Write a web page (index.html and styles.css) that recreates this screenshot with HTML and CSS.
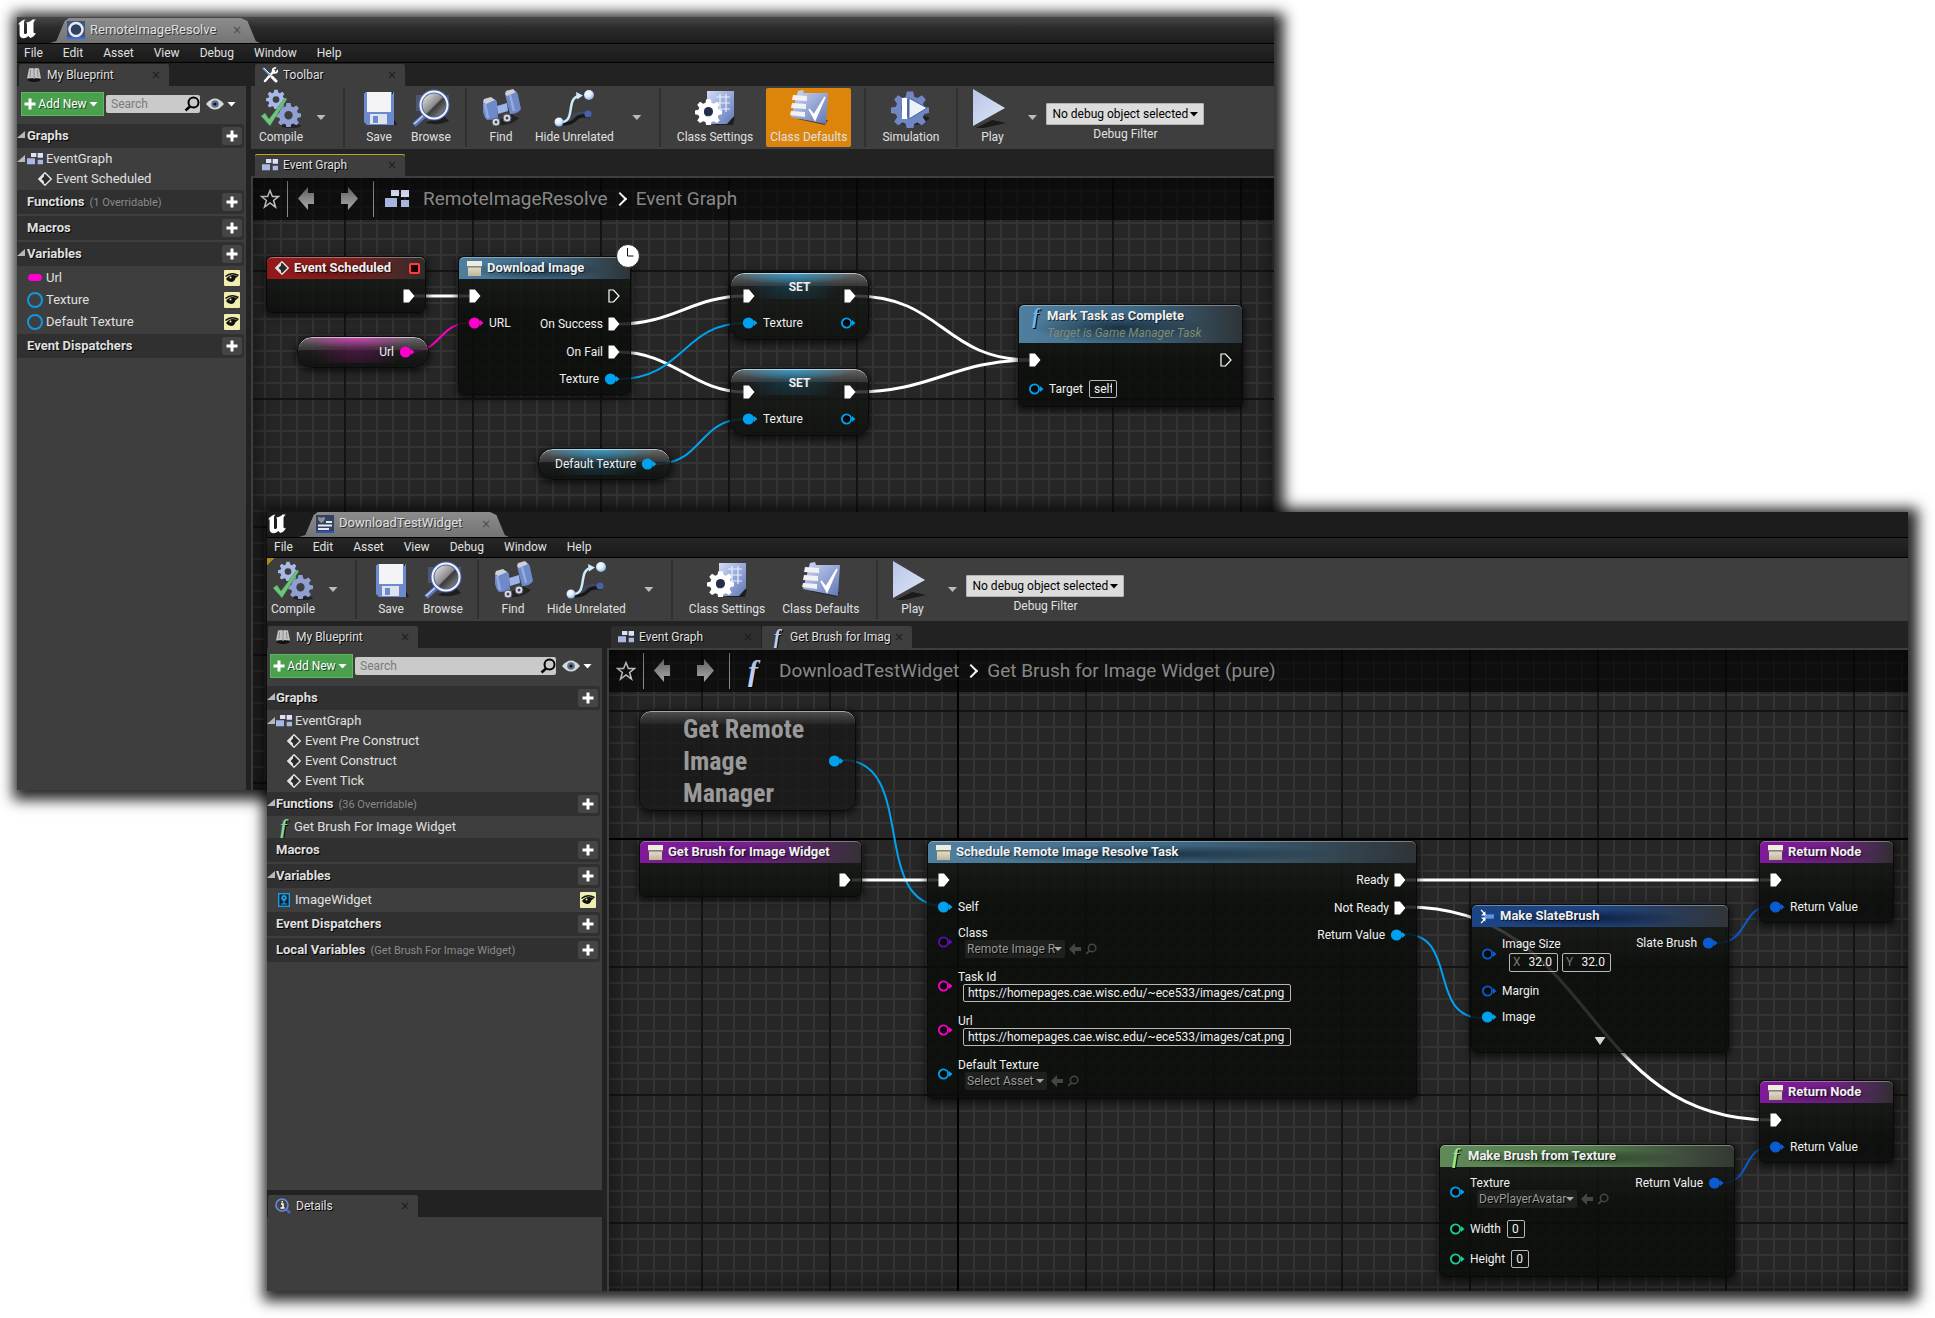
FILE: index.html
```html
<!DOCTYPE html>
<html lang="en">
<head>
<meta charset="utf-8">
<title>Blueprint editors</title>
<link rel="stylesheet" href="styles.css">
</head>
<body>
<svg class="defs" aria-hidden="true">
  <defs>
    <linearGradient id="steel" x1="0" y1="0" x2="1" y2="1"><stop offset="0" stop-color="#d3dcf5"/><stop offset="1" stop-color="#5f76b8"/></linearGradient>
    <linearGradient id="pale" x1="0" y1="0" x2="1" y2="1"><stop offset="0" stop-color="#b9c4ea"/><stop offset="1" stop-color="#dce8f2"/></linearGradient>
    <linearGradient id="glass" x1="0" y1="0" x2="1" y2="1"><stop offset="0" stop-color="#fff"/><stop offset=".5" stop-color="#8a8a8a"/><stop offset=".55" stop-color="#3a3a3a"/><stop offset="1" stop-color="#aaa"/></linearGradient>
    <radialGradient id="ball" cx=".4" cy=".35" r=".7"><stop offset="0" stop-color="#fff"/><stop offset=".5" stop-color="#dcecff"/><stop offset="1" stop-color="#7aa0dc"/></radialGradient>
    <linearGradient id="sand" x1="0" y1="0" x2="0" y2="1"><stop offset="0" stop-color="#e0dcc8"/><stop offset="1" stop-color="#c0b894"/></linearGradient>
    <linearGradient id="grayv" x1="0" y1="0" x2="0" y2="1"><stop offset="0" stop-color="#6a6a6a"/><stop offset="1" stop-color="#aaa"/></linearGradient>
  </defs>
  <symbol id="logo" viewBox="0 0 20 20"><path fill="#fff" d="M1 5.500C2.500 3 5.500 1 8.500.6 7.300 1.600 7 2.500 7 4v9.500c0 1.400 1 2 2.200 1.300.5-.3.8-.7.8-1.200V5.600C10 4.500 9.700 4 9 3.500 11.500 3.500 14 2.300 15.500.6h3.300C17.200 2 16.500 3 16.500 4.600v8.200c0 1.500 1 1.900 2.500.9-1.200 2.900-3.100 4.500-5.700 5.300l-2-2C9.600 18.600 8 19.300 6 19.200c-2.200-.3-3.400-1.700-3.400-4.200V6.500C2.600 5.400 2 5 1 5.500z"/></symbol>
  <symbol id="ring" viewBox="0 0 18 18"><rect width="18" height="18" fill="#3d5580"/><rect y="16" width="18" height="2" fill="#2e6be6"/><circle cx="9" cy="8.500" r="6.500" fill="#2f4060" stroke="#e8eaf0" stroke-width="2.500"/></symbol>
  <symbol id="widget" viewBox="0 0 18 18"><rect width="18" height="18" fill="#33435f"/><rect y="16" width="18" height="2" fill="#2458b8"/><path d="M2 3.500c0-2 3-2 3.500 0C6 1.500 9 1.500 9 3.500 9 6 5.500 8 5.500 8S2 6 2 3.500z" fill="#8b8f98"/><path d="M10 7h6M2 10.500h14M2 14h11" stroke="#e8eaf0" stroke-width="2"/></symbol>
  <symbol id="book" viewBox="0 0 16 16"><path d="M3 1.500 7 1l1 1 1-1 4 .5L15 11.500 9 11l-1 1-1-1-6 .5z" fill="#c4c4c4"/><path d="M8 2v9M4.500 3 4 10M11.500 3l.5 7" stroke="#8e8e8e" fill="none"/><path d="M1.500 12 7 11.500l1 1 1-1 5.500.5v1.500l-4.500 1.500h-4L1.500 13.500z" fill="#111"/></symbol>
  <symbol id="tools" viewBox="0 0 16 16"><path d="M12 4 3 14" stroke="#fff" stroke-width="2.500" stroke-linecap="round"/><path d="m10.500 5 .5-3 3-1.500M11.500 6l3-.5L16 3" stroke="#fff" stroke-width="1.800" fill="none"/><path d="m1.500 1.500 6 6" stroke="#6d9be8" stroke-width="2" stroke-linecap="round"/><path d="m2 1 6 6" stroke="#e8f0ff" stroke-width="1"/><path d="m10 10 4 4" stroke="#fff" stroke-width="3" stroke-linecap="round"/></symbol>
  <symbol id="gear" viewBox="-12 -12 24 24"><path fill-rule="evenodd" d="M-2-11h4l.7 3.200 2 .8L7.500-8.700 10-6 8.200-3.300 9-1.500 12-1v3.500l-3 .6-.9 2L10 8 7.500 10.300 4.700 8.600l-2 .8L2 12.500h-4l-.7-3.100-2-.8-2.800 1.700L-10 8l1.900-2.900-.9-2-3-.6V-1l3-.5.8-1.800L-10-6l2.500-2.700L-4.700-7l2-.8zM0-3.300A4 4 0 1 0 0 4.700 4 4 0 0 0 0-3.300z"/></symbol>
  <symbol id="compile" viewBox="0 0 40 40"><ellipse cx="30" cy="37" rx="10" ry="2" fill="#111" opacity=".6"/><use href="#gear" x="5" y="0" width="20" height="20" fill="#aab8e6"/><use href="#gear" x="15" y="13" width="25" height="25" fill="#8f9fd2"/><path d="M0 27l4-3 4 6L24 9l2 1L9 37z" fill="#6fc57a" stroke="#3b7d48" stroke-width=".6"/></symbol>
  <symbol id="save" viewBox="0 0 40 40"><path d="M8 36h30l-3-6z" fill="#111" opacity=".7"/><path d="M5 3h30v33H8l-3-3z" fill="#6d89cf"/><path d="M8 3h24v20H8z" fill="#f4f4f6"/><path d="M11 25h17v10H11z" fill="#dfe3ee"/><path d="M14 27h5v7h-5z" fill="#6d89cf"/><path d="M5 3h1v1H5zM33 3h1v2h-1z" fill="#222"/></symbol>
  <symbol id="browse" viewBox="0 0 40 40"><path d="M14 34q14 3 24-2l-6-6z" fill="#111" opacity=".7"/><path d="M5 6h33v16H5z" fill="#7088c8" opacity=".35"/><path d="M14 26 3 36" stroke="#5a76c0" stroke-width="5"/><path d="M13 26 3 35" stroke="#c6d2f2" stroke-width="1.500"/><circle cx="23" cy="16" r="13.500" fill="url(#glass)" stroke="#4a66a8" stroke-width="4"/><circle cx="23" cy="16" r="13.500" fill="none" stroke="#f2f5ff" stroke-width="2"/></symbol>
  <symbol id="find" viewBox="0 0 40 40"><path d="M10 35q18 4 28-6l-8-4z" fill="#111" opacity=".6"/><path d="m2 13 10-3q3 0 4 3l1 17-11 1q-3-3-4-8zM24 5l9-3q3 0 4 4l3 14q-3 5-11 5z" fill="#6f8acb"/><path d="m4 15 3 14M29 6l4 16" stroke="#93abdf" stroke-width="2.500"/><path d="m2 13 1-3 7-2 4 3-9 4zM24 5l1-3 7-2 3 3-9 4z" fill="#cfd0d4"/><path d="m16 17 10-3 1 8-10 3z" fill="#9db4e8"/><circle cx="15" cy="33" r="4" fill="#d7dbe6" stroke="#556"/><circle cx="26" cy="29" r="4" fill="#d7dbe6" stroke="#556"/><circle cx="15" cy="33" r="1.500" fill="#445"/><circle cx="26" cy="29" r="1.500" fill="#445"/></symbol>
  <symbol id="hide" viewBox="0 0 40 40"><path d="M8 35q10 0 14-5t14-2" stroke="#161616" stroke-width="3" fill="none"/><path d="M6 33q9 0 12-5t14-4" stroke="#3c4a6a" stroke-width="2" fill="none"/><circle cx="34" cy="25" r="3.500" fill="#4763a8"/><path d="M5 33c18 2 6-24 20-26" stroke="#cfeaf8" stroke-width="2.500" fill="none"/><path d="m22 3 7 3.500-6 4z" fill="#cfeaf8"/><circle cx="5" cy="33" r="4.500" fill="url(#ball)"/><circle cx="35" cy="6" r="5" fill="url(#ball)"/></symbol>
  <symbol id="settings" viewBox="0 0 40 40"><path d="M18 36h20l2-8z" fill="#111" opacity=".7"/><path d="M12 2h27v25l-7 8H12z" fill="url(#steel)"/><path d="M21 8h14M21 14h14M21 20h14M25 5v18M31 5v18" stroke="#e8efff" stroke-width="1.200"/><use href="#gear" x="0" y="9" width="27" height="27" fill="#fff"/><circle cx="13.500" cy="22.500" r="4.500" fill="#222e48"/></symbol>
  <symbol id="defaults" viewBox="0 0 40 40"><path d="m8 30 28 6 3-5z" fill="#111" opacity=".6"/><path d="m9 2 5-1 1 3h24l-2 31-35-7z" fill="url(#steel)"/><path d="m4 6 14 1v5L3 11zM3 14l14 1v5L2 19zM2 22l14 1v5L1 26z" fill="#f2f2f6"/><path d="m20 20 5 6L36 8l-10 23z" fill="#fff" stroke="#fff" stroke-width="1.500"/></symbol>
  <symbol id="simulation" viewBox="0 0 40 40"><path d="M8 34q20 6 31-5l-5-2z" fill="#111" opacity=".7"/><use href="#gear" x="0" y="1" width="38" height="38" fill="#7187c4"/><circle cx="19" cy="19" r="9" fill="#5068a8"/><path d="M11 9h5v21h-5z" fill="#fff"/><path d="m18 9 18 10-18 11z" fill="#eaf4f8" stroke="#4a609c"/></symbol>
  <symbol id="play" viewBox="0 0 40 40"><path d="M4 39h8l22-5-14-3z" fill="#111" opacity=".8"/><path d="M1 0v37l32-18z" fill="url(#pale)"/></symbol>
  <symbol id="nodes" viewBox="0 0 24 20"><path d="M12 4h8v13" stroke="#3e3e3e" fill="none"/><path d="M6 1h8v6H6zM16 1h8v7h-8z" fill="#dbe3fa"/><path d="M0 9h12v9H0zM16 11h8v7h-8z" fill="#a9b7e2"/></symbol>
  <symbol id="event" viewBox="0 0 14 14"><path d="M7 .8 13.200 7 7 13.200.8 7z" fill="#2a2a2a" stroke="#e4e4e4" stroke-width="1.400"/><path d="M6 1.500v3L3.500 7 6 9.500v3L1 7z" fill="#e4e4e4"/></symbol>
  <symbol id="box" viewBox="0 0 15 15"><path d="M0 0h15v5H0z" fill="#efeddf"/><path d="M0 5h15v1.500H0z" fill="#8d8570"/><path d="M1 6.500h13V15H1z" fill="url(#sand)"/></symbol>
  <symbol id="plus" viewBox="0 0 12 12"><path d="M4.500.5h3v4h4v3h-4v4h-3v-4h-4v-3h4z" fill="#fff"/></symbol>
  <symbol id="lens" viewBox="0 0 16 16"><circle cx="9.500" cy="6.500" r="5" fill="none" stroke="currentColor" stroke-width="2"/><path d="m6 10.500-4.500 4" stroke="currentColor" stroke-width="2.500"/></symbol>
  <symbol id="eye" viewBox="0 0 18 12"><path d="M0 6q9-11 18 0-9 11-18 0z" fill="#d8d8d8"/><circle cx="9" cy="6" r="3.800" fill="#5b7192"/><circle cx="9" cy="6" r="1.600" fill="#111"/></symbol>
  <symbol id="eyeon" viewBox="0 0 16 16"><rect width="16" height="16" rx="1" fill="#f0eeb0"/><path d="M2 9q3-4 7-4 3 0 5 1.500L11.500 8q-1 4-4.500 4-3 0-5-3z" fill="#111"/><path d="M1.500 6.500Q7 1.500 14.500 5.500" stroke="#111" fill="none" stroke-width="1.500"/><circle cx="6.500" cy="7.500" r="1" fill="#f0eeb0"/></symbol>
  <symbol id="star" viewBox="0 0 20 20"><path d="m10 1.500 2.400 6h6.100l-4.900 4 1.900 6.500-5.500-4-5.500 4 1.900-6.500-4.900-4h6.100z" fill="none" stroke="#ccc" stroke-width="1.500"/></symbol>
  <symbol id="back" viewBox="0 0 18 24"><path d="M0 11.500 10 0v6h6v11h-6v6z" fill="url(#grayv)"/></symbol>
  <symbol id="fwd" viewBox="0 0 18 24"><path d="M18 11.500 8 0v6H1v11h7v6z" fill="url(#grayv)"/></symbol>
  <symbol id="info" viewBox="0 0 16 16"><path d="m11 11 4 4" stroke="#4a66c8" stroke-width="2.500"/><circle cx="7" cy="7" r="6" fill="#444" stroke="#6f8be0" stroke-width="1.500"/><path d="M6 6h2v4h1.500M5.500 10H9M6.500 3.800h1.500" stroke="#fff" stroke-width="1.500" fill="none"/></symbol>
  <symbol id="image" viewBox="0 0 12 14"><rect x=".7" y=".7" width="10.600" height="12.600" fill="#123" stroke="#1b9be6" stroke-width="1.400"/><circle cx="6" cy="5" r="2" fill="#123" stroke="#1b9be6" stroke-width="1.800"/><path d="M6 5v6M3 11h6" stroke="#1b9be6" stroke-width="1.200"/></symbol>
  <symbol id="merge" viewBox="0 0 14 14"><path d="M4 7h9" stroke="#5f93ea" stroke-width="4"/><path d="m1 1 4 4M1 13l4-4" stroke="#fff" stroke-width="1.200"/><path d="M5 2v4H1zM5 12V8H1z" fill="#fff"/></symbol>
  <symbol id="exec" viewBox="0 0 14 14"><path d="M1.500.5H7l5.500 6.500L7 13.500H1.500z" fill="#fff"/></symbol>
  <symbol id="execoff" viewBox="0 0 14 14"><path d="M2 1h4.500L12 7l-5.500 6H2z" fill="none" stroke="#fff" stroke-width="1.200"/></symbol>
  <symbol id="pin" viewBox="0 0 18 14"><circle cx="7.500" cy="7" r="5.600" fill="currentColor"/><path d="m13 4 3.500 3-3.500 3z" fill="currentColor"/></symbol>
  <symbol id="pinoff" viewBox="0 0 18 14"><circle cx="7.500" cy="7" r="4.600" fill="#080808" stroke="currentColor" stroke-width="1.800"/><path d="m13 4 3.500 3-3.500 3z" fill="currentColor"/></symbol>
  <symbol id="use" viewBox="0 0 12 12"><path d="m0 6 6-6v4h6v4H6v4z" fill="currentColor"/></symbol>
  <symbol id="clock" viewBox="0 0 24 24"><circle cx="12" cy="12" r="11.500" fill="#fff" stroke="#222"/><path d="M11.500 4v8h6" fill="none" stroke="#111"/></symbol>
</svg>

<main class="desktop">

<section class="window window-a">
  <header class="titlebar">
    <svg class="logo"><use href="#logo"/></svg>
    <div class="doc-tab"><svg class="i18"><use href="#ring"/></svg><span>RemoteImageResolve</span><button class="close" aria-label="Close">×</button></div>
  </header>
  <nav class="menu"><a href="#">File</a><a href="#">Edit</a><a href="#">Asset</a><a href="#">View</a><a href="#">Debug</a><a href="#">Window</a><a href="#">Help</a></nav>
  <div class="split split-a">
    <aside class="side">
      <div class="tabs tabs-top"><div class="tab"><svg class="i16"><use href="#book"/></svg><span>My Blueprint</span><button class="close" aria-label="Close">×</button></div></div>
      <div class="panel grow">
        <div class="filter"><button class="add"><svg class="i12"><use href="#plus"/></svg>Add New<i class="caret"></i></button><label class="search"><input type="text" placeholder="Search" aria-label="Search"><svg class="i16"><use href="#lens"/></svg></label><button class="view" aria-label="View options"><svg class="eye"><use href="#eye"/></svg><i class="caret"></i></button></div>
        <h3 class="group open">Graphs<button aria-label="Add graph"><svg class="i12"><use href="#plus"/></svg></button></h3>
        <div class="item open"><svg class="graph-icon"><use href="#nodes"/></svg>EventGraph</div>
        <div class="item child"><svg class="i14"><use href="#event"/></svg>Event Scheduled</div>
        <h3 class="group">Functions<small>(1 Overridable)</small><button aria-label="Add function"><svg class="i12"><use href="#plus"/></svg></button></h3>
        <h3 class="group">Macros<button aria-label="Add macro"><svg class="i12"><use href="#plus"/></svg></button></h3>
        <h3 class="group open">Variables<button aria-label="Add variable"><svg class="i12"><use href="#plus"/></svg></button></h3>
        <div class="item var"><i class="pill"></i>Url<svg class="i16 shown"><use href="#eyeon"/></svg></div>
        <div class="item var"><i class="hoop"></i>Texture<svg class="i16 shown"><use href="#eyeon"/></svg></div>
        <div class="item var"><i class="hoop"></i>Default Texture<svg class="i16 shown"><use href="#eyeon"/></svg></div>
        <h3 class="group">Event Dispatchers<button aria-label="Add dispatcher"><svg class="i12"><use href="#plus"/></svg></button></h3>
      </div>
    </aside>
    <div class="work">
      <div class="tabs tabs-top"><div class="tab"><svg class="i16"><use href="#tools"/></svg><span>Toolbar</span><button class="close" aria-label="Close">×</button></div></div>
      <div class="toolbar inset">
        <button class="tool"><svg><use href="#compile"/></svg>Compile</button><button class="more" aria-label="Compile options"><i class="caret"></i></button><hr>
        <button class="tool"><svg><use href="#save"/></svg>Save</button><button class="tool"><svg><use href="#browse"/></svg>Browse</button><hr>
        <button class="tool"><svg><use href="#find"/></svg>Find</button><button class="tool wide"><svg><use href="#hide"/></svg>Hide Unrelated</button><button class="more" aria-label="Hide options"><i class="caret"></i></button><hr>
        <button class="tool wide"><svg><use href="#settings"/></svg>Class Settings</button><button class="tool wide active"><svg><use href="#defaults"/></svg>Class Defaults</button><hr>
        <button class="tool wide"><svg><use href="#simulation"/></svg>Simulation</button><hr>
        <button class="tool"><svg><use href="#play"/></svg>Play</button><button class="more" aria-label="Play options"><i class="caret"></i></button>
        <div class="debug"><span class="select"><select id="debug-a"><option>No debug object selected</option></select></span><label for="debug-a">Debug Filter</label></div>
      </div>
      <div class="tabs"><div class="tab focus"><svg class="i16"><use href="#nodes"/></svg><span>Event Graph</span><button class="close" aria-label="Close">×</button></div></div>
      <div class="graph graph-a">
        <div class="crumbs"><button aria-label="Favourite"><svg class="i20"><use href="#star"/></svg></button><hr><button class="step" aria-label="Back"><svg class="arrow"><use href="#back"/></svg></button><button class="step" aria-label="Forward"><svg class="arrow"><use href="#fwd"/></svg></button><hr><svg class="crumb-icon"><use href="#nodes"/></svg><a href="#">RemoteImageResolve</a><i class="chev"></i><span>Event Graph</span></div>
        <svg class="wires">
          <path d="M160 118H218"/>
          <path class="pink" d="M158 174C188 174 186 145 216 145"/>
          <path d="M366 146C420 146 440 118 492 118"/>
          <path d="M366 174C420 174 440 214 492 214"/>
          <path class="sky" d="M366 201C430 201 430 145 492 145"/>
          <path class="sky" d="M403 286C450 286 445 241 492 241"/>
          <path d="M602 118C690 118 690 182 778 182"/>
          <path d="M602 214C680 214 700 182 778 182"/>
        </svg>
        <article class="node n-event">
          <header class="red"><svg class="i14"><use href="#event"/></svg><b>Event Scheduled</b><i class="delegate"></i></header>
          <div class="pins"><div class="in"></div><div class="out"><div class="x"><svg class="exec"><use href="#exec"/></svg></div></div></div>
        </article>
        <article class="node n-download">
          <header class="blue"><svg class="i15"><use href="#box"/></svg><b>Download Image</b></header>
          <svg class="clock"><use href="#clock"/></svg>
          <div class="pins">
            <div class="in"><div class="x"><svg class="exec"><use href="#exec"/></svg></div><div class="d"><svg class="pin pink"><use href="#pin"/></svg>URL</div></div>
            <div class="out"><div class="x"><svg class="exec"><use href="#execoff"/></svg></div><div class="x">On Success<svg class="exec"><use href="#exec"/></svg></div><div class="x">On Fail<svg class="exec"><use href="#exec"/></svg></div><div class="d">Texture<svg class="pin sky"><use href="#pin"/></svg></div></div>
          </div>
        </article>
        <article class="node getter pinkish n-url">Url<svg class="pin pink"><use href="#pin"/></svg></article>
        <article class="node getter skyish n-default">Default Texture<svg class="pin sky"><use href="#pin"/></svg></article>
        <article class="node setter skyish n-set1">
          <b>SET</b>
          <div class="pins"><div class="in"><div class="x"><svg class="exec"><use href="#exec"/></svg></div><div class="d"><svg class="pin sky"><use href="#pin"/></svg>Texture</div></div><div class="out"><div class="x"><svg class="exec"><use href="#exec"/></svg></div><div class="d"><svg class="pin sky"><use href="#pinoff"/></svg></div></div></div>
        </article>
        <article class="node setter skyish n-set2">
          <b>SET</b>
          <div class="pins"><div class="in"><div class="x"><svg class="exec"><use href="#exec"/></svg></div><div class="d"><svg class="pin sky"><use href="#pin"/></svg>Texture</div></div><div class="out"><div class="x"><svg class="exec"><use href="#exec"/></svg></div><div class="d"><svg class="pin sky"><use href="#pinoff"/></svg></div></div></div>
        </article>
        <article class="node n-mark">
          <header class="blue tall"><i class="fn">f</i><div><b>Mark Task as Complete</b><em>Target is Game Manager Task</em></div></header>
          <div class="pins">
            <div class="in"><div class="x"><svg class="exec"><use href="#exec"/></svg></div><label class="n"><svg class="pin sky"><use href="#pinoff"/></svg>Target<input class="field self" value="self"></label></div>
            <div class="out"><div class="x"><svg class="exec"><use href="#execoff"/></svg></div></div>
          </div>
        </article>
      </div>
    </div>
  </div>
</section>

<section class="window window-b">
  <header class="titlebar">
    <svg class="logo"><use href="#logo"/></svg>
    <div class="doc-tab"><svg class="i18"><use href="#widget"/></svg><span>DownloadTestWidget</span><button class="close" aria-label="Close">×</button></div>
  </header>
  <nav class="menu"><a href="#">File</a><a href="#">Edit</a><a href="#">Asset</a><a href="#">View</a><a href="#">Debug</a><a href="#">Window</a><a href="#">Help</a></nav>
  <div class="toolbar flag">
    <button class="tool"><svg><use href="#compile"/></svg>Compile</button><button class="more" aria-label="Compile options"><i class="caret"></i></button><hr>
    <button class="tool"><svg><use href="#save"/></svg>Save</button><button class="tool"><svg><use href="#browse"/></svg>Browse</button><hr>
    <button class="tool"><svg><use href="#find"/></svg>Find</button><button class="tool wide"><svg><use href="#hide"/></svg>Hide Unrelated</button><button class="more" aria-label="Hide options"><i class="caret"></i></button><hr>
    <button class="tool wide"><svg><use href="#settings"/></svg>Class Settings</button><button class="tool wide"><svg><use href="#defaults"/></svg>Class Defaults</button><hr>
    <button class="tool"><svg><use href="#play"/></svg>Play</button><button class="more" aria-label="Play options"><i class="caret"></i></button>
    <div class="debug"><span class="select"><select id="debug-b"><option>No debug object selected</option></select></span><label for="debug-b">Debug Filter</label></div>
  </div>
  <div class="split split-b">
    <aside class="side">
      <div class="tabs"><div class="tab"><svg class="i16"><use href="#book"/></svg><span>My Blueprint</span><button class="close" aria-label="Close">×</button></div></div>
      <div class="panel grow">
        <div class="filter"><button class="add"><svg class="i12"><use href="#plus"/></svg>Add New<i class="caret"></i></button><label class="search"><input type="text" placeholder="Search" aria-label="Search"><svg class="i16"><use href="#lens"/></svg></label><button class="view" aria-label="View options"><svg class="eye"><use href="#eye"/></svg><i class="caret"></i></button></div>
        <h3 class="group open">Graphs<button aria-label="Add graph"><svg class="i12"><use href="#plus"/></svg></button></h3>
        <div class="item open"><svg class="graph-icon"><use href="#nodes"/></svg>EventGraph</div>
        <div class="item child"><svg class="i14"><use href="#event"/></svg>Event Pre Construct</div>
        <div class="item child"><svg class="i14"><use href="#event"/></svg>Event Construct</div>
        <div class="item child"><svg class="i14"><use href="#event"/></svg>Event Tick</div>
        <h3 class="group open">Functions<small>(36 Overridable)</small><button aria-label="Add function"><svg class="i12"><use href="#plus"/></svg></button></h3>
        <div class="item"><i class="fn mint">f</i>Get Brush For Image Widget</div>
        <h3 class="group">Macros<button aria-label="Add macro"><svg class="i12"><use href="#plus"/></svg></button></h3>
        <h3 class="group open">Variables<button aria-label="Add variable"><svg class="i12"><use href="#plus"/></svg></button></h3>
        <div class="item var"><svg class="graph-icon"><use href="#image"/></svg>ImageWidget<svg class="i16 shown"><use href="#eyeon"/></svg></div>
        <h3 class="group">Event Dispatchers<button aria-label="Add dispatcher"><svg class="i12"><use href="#plus"/></svg></button></h3>
        <h3 class="group">Local Variables<small>(Get Brush For Image Widget)</small><button aria-label="Add local variable"><svg class="i12"><use href="#plus"/></svg></button></h3>
      </div>
      <div class="tabs"><div class="tab"><svg class="i16"><use href="#info"/></svg><span>Details</span><button class="close" aria-label="Close">×</button></div></div>
      <div class="panel details"></div>
    </aside>
    <div class="work">
      <div class="tabs"><div class="tab idle"><svg class="i16"><use href="#nodes"/></svg><span>Event Graph</span><button class="close" aria-label="Close">×</button></div><div class="tab"><i class="fn steel">f</i><span>Get Brush for Imag</span><button class="close" aria-label="Close">×</button></div></div>
      <div class="graph graph-b">
        <div class="crumbs"><button aria-label="Favourite"><svg class="i20"><use href="#star"/></svg></button><hr><button class="step" aria-label="Back"><svg class="arrow"><use href="#back"/></svg></button><button class="step" aria-label="Forward"><svg class="arrow"><use href="#fwd"/></svg></button><hr><i class="fn steel crumb-icon">f</i><a href="#">DownloadTestWidget</a><i class="chev"></i><span>Get Brush for Image Widget (pure)</span></div>
        <svg class="wires">
          <path class="sky" d="M234 110C309 110 260 256 335 256"/>
          <path d="M243 230H330"/>
          <path d="M797 230H1162"/>
          <path d="M797 257C987 257 972 470 1162 470"/>
          <path class="sky" d="M795 284C850 284 818 368 873 368"/>
          <path class="royal" d="M1108 293C1140 293 1132 256 1162 256"/>
          <path class="royal" d="M1113 533C1143 533 1132 497 1162 497"/>
        </svg>
        <article class="node compact n-manager"><b>Get Remote<br>Image<br>Manager</b><svg class="pin sky"><use href="#pin"/></svg></article>
        <article class="node n-entry">
          <header class="purple"><svg class="i15"><use href="#box"/></svg><b>Get Brush for Image Widget</b></header>
          <div class="pins"><div class="in"></div><div class="out"><div class="x"><svg class="exec"><use href="#exec"/></svg></div></div></div>
        </article>
        <article class="node n-schedule">
          <header class="blue"><svg class="i15"><use href="#box"/></svg><b>Schedule Remote Image Resolve Task</b></header>
          <div class="pins">
            <div class="in">
              <div class="x"><svg class="exec"><use href="#exec"/></svg></div>
              <div class="d"><svg class="pin sky"><use href="#pin"/></svg>Self</div>
              <div class="block"><svg class="pin violet"><use href="#pinoff"/></svg><div><label for="cls">Class</label><div class="asset"><span class="select dark"><select id="cls" class="long"><option>Remote Image R</option></select></span><svg class="i12"><use href="#use"/></svg><svg class="i12"><use href="#lens"/></svg></div></div></div>
              <div class="block"><svg class="pin pink"><use href="#pinoff"/></svg><div><label for="task">Task Id</label><input id="task" class="field url" value="https://homepages.cae.wisc.edu/~ece533/images/cat.png"></div></div>
              <div class="block"><svg class="pin pink"><use href="#pinoff"/></svg><div><label for="url">Url</label><input id="url" class="field url" value="https://homepages.cae.wisc.edu/~ece533/images/cat.png"></div></div>
              <div class="block"><svg class="pin sky"><use href="#pinoff"/></svg><div><label for="tex">Default Texture</label><div class="asset"><span class="select dark"><select id="tex" class="short"><option>Select Asset</option></select></span><svg class="i12"><use href="#use"/></svg><svg class="i12"><use href="#lens"/></svg></div></div></div>
            </div>
            <div class="out"><div class="x">Ready<svg class="exec"><use href="#exec"/></svg></div><div class="x">Not Ready<svg class="exec"><use href="#exec"/></svg></div><div class="d">Return Value<svg class="pin sky"><use href="#pin"/></svg></div></div>
          </div>
        </article>
        <article class="node n-slate">
          <header class="navy"><svg class="i15"><use href="#merge"/></svg><b>Make SlateBrush</b></header>
          <div class="pins">
            <div class="in">
              <div class="block vector"><svg class="pin royal"><use href="#pinoff"/></svg><div><span>Image Size</span><div class="asset"><label class="axis">X<input value="32.0"></label><label class="axis">Y<input value="32.0"></label></div></div></div>
              <div class="d"><svg class="pin royal"><use href="#pinoff"/></svg>Margin</div>
              <div class="d"><svg class="pin sky"><use href="#pin"/></svg>Image</div>
            </div>
            <div class="out"><div class="d">Slate Brush<svg class="pin royal"><use href="#pin"/></svg></div></div>
          </div>
          <button class="expand" aria-label="Show advanced pins"><i class="caret"></i></button>
        </article>
        <article class="node n-return1">
          <header class="purple"><svg class="i15"><use href="#box"/></svg><b>Return Node</b></header>
          <div class="pins"><div class="in"><div class="x"><svg class="exec"><use href="#exec"/></svg></div><div class="d"><svg class="pin royal"><use href="#pin"/></svg>Return Value</div></div></div>
        </article>
        <article class="node n-return2">
          <header class="purple"><svg class="i15"><use href="#box"/></svg><b>Return Node</b></header>
          <div class="pins"><div class="in"><div class="x"><svg class="exec"><use href="#exec"/></svg></div><div class="d"><svg class="pin royal"><use href="#pin"/></svg>Return Value</div></div></div>
        </article>
        <article class="node n-brush">
          <header class="green"><i class="fn lime">f</i><b>Make Brush from Texture</b></header>
          <div class="pins">
            <div class="in">
              <div class="block"><svg class="pin sky"><use href="#pinoff"/></svg><div><label for="avatar">Texture</label><div class="asset"><span class="select dark"><select id="avatar" class="long"><option>DevPlayerAvatar</option></select></span><svg class="i12"><use href="#use"/></svg><svg class="i12"><use href="#lens"/></svg></div></div></div>
              <label class="n"><svg class="pin teal"><use href="#pinoff"/></svg>Width<input class="field num" value="0"></label>
              <label class="n"><svg class="pin teal"><use href="#pinoff"/></svg>Height<input class="field num" value="0"></label>
            </div>
            <div class="out"><div class="d">Return Value<svg class="pin royal"><use href="#pin"/></svg></div></div>
          </div>
        </article>
      </div>
    </div>
  </div>
</section>

</main>
</body>
</html>
```
FILE: styles.css
```css
* { box-sizing: border-box; }
body { margin: 0; background: #fff; color: #e0e0e0; font: 12px/16px Roboto, "Noto Sans", sans-serif; }
button { font: inherit; color: inherit; background: none; border: 0; padding: 0; }
input, select { font: inherit; color: inherit; margin: 0; min-width: 0; }
a { color: inherit; text-decoration: none; }
hr { margin: 0; border: 0; }
svg { display: block; flex: none; }
.defs { position: absolute; width: 0; height: 0; }
.i12 { width: 12px; height: 12px; }
.i14 { width: 14px; height: 14px; }
.i15 { width: 15px; height: 15px; }
.i16 { width: 16px; height: 16px; }
.i18 { width: 18px; height: 18px; }
.i20 { width: 20px; height: 20px; }
.caret { width: 9px; height: 5px; background: currentColor; clip-path: polygon(0 0, 100% 0, 50% 100%); flex: none; }

/* Two overlapping windows */
.desktop { min-height: 100vh; padding: 17px 27px 27px 17px; display: grid; grid-template-columns: 250px 1007fr 634fr; grid-template-rows: 495px 278px 1fr; }
.window { display: flex; flex-direction: column; min-width: 0; background: #222; box-shadow: 3px 3px 13px 7px rgba(0, 0, 0, .85); }
.window-a { grid-area: 1 / 1 / 3 / 3; }
.window-b { grid-area: 2 / 2 / 4 / 4; z-index: 1; }

.titlebar { display: flex; height: 27px; border-bottom: 1px solid #000; background: linear-gradient(#484848, #2c2c2c 40%, #1c1c1c); }
.window-b .titlebar { height: 26px; background: #1c1c1c; }
.logo { width: 20px; height: 20px; margin-top: 2px; }
.doc-tab { display: flex; align-items: center; width: 210px; margin: 1px 0 0 13px; padding: 0 17px 1px; font-size: 13px; background: linear-gradient(#8c8c8c, #747474); clip-path: polygon(0 100%, 3% 92%, 7% 12%, 9% 0, 91% 0, 94% 12%, 98% 92%, 100% 100%); }
.window-b .doc-tab { margin-top: 0; margin-left: 12px; padding-bottom: 2px; }
.doc-tab span { flex: 1; margin-left: 5px; padding-bottom: 1px; text-shadow: 1px 1px 0 #333; }
.close { color: #1c1c1c; font: 12px/16px "DejaVu Sans", sans-serif; width: 12px; text-align: center; text-shadow: none; }
.doc-tab .close { color: #4c4c4c; }
.menu { display: flex; gap: 20px; height: 19px; padding: 0 7px; border-bottom: 1px solid #000; background: linear-gradient(#262626, #1a1a1a); line-height: 18px; }
.window-b .menu { height: 20px; }

.split { flex: 1; display: grid; column-gap: 5px; min-height: 0; }
.split-a { grid-template-columns: 229px 1fr; }
.split-b { grid-template-columns: 335px 1fr; }
.side, .work { display: flex; flex-direction: column; min-width: 0; }
.tabs { display: flex; gap: 1px; height: 27px; padding: 5px 1px 0; }
.work .tabs { padding-left: 4px; }
.tabs-top { height: 23px; padding-top: 1px; padding-left: 2px; }
.tab { display: flex; align-items: center; width: 150px; padding: 0 7px; background: #3e3e3e; border-radius: 2px 2px 0 0; text-shadow: 1px 1px 0 #000; }
.tab span { flex: 1; margin-left: 5px; white-space: nowrap; }
.tab .fn { width: 16px; font-size: 20px; }
.tab.idle { background: #2e2e2e; }
.tab.focus { box-shadow: inset 0 1px 0 #b8a818; }
.panel { background: #3e3e3e; padding-right: 2px; }
.grow { flex: 1; }
.details { height: 74px; }

/* Toolbar */
.toolbar { display: flex; align-items: center; height: 63px; background: #3e3e3e; text-shadow: 1px 1px 0 #000; }
.toolbar.inset { padding-left: 4px; }
.toolbar.flag { background: linear-gradient(135deg, #b08a20 5px, transparent 5px), #3e3e3e; }
.tool { display: flex; flex-direction: column; align-items: center; width: 44px; height: 59px; margin: 0 4px; padding-top: 1px; white-space: nowrap; }
.tool.wide { width: auto; margin-right: 5px; padding: 1px 4px 0; }
.tool svg { width: 40px; height: 40px; }
.tool.active { background: #dc850c; border-radius: 2px; }
.more { display: flex; align-items: center; justify-content: center; width: 28px; height: 59px; color: #bbb; }
.toolbar hr { width: 2px; height: 59px; margin: 0 8px; background: #303030; }
.debug { display: flex; flex-direction: column; align-items: center; gap: 1px; margin-top: 9px; text-shadow: none; }
.select { position: relative; display: inline-flex; }
.select select { appearance: none; border: 1px solid #b4b4b4; border-radius: 1px; background: #dcdcdc; color: #000; width: 158px; height: 22px; padding: 0 5px; }
.select::after { content: ""; position: absolute; right: 6px; top: 9px; width: 9px; height: 5px; background: #000; clip-path: polygon(0 0, 100% 0, 50% 100%); pointer-events: none; }

/* My Blueprint */
.filter { display: flex; align-items: center; height: 36px; padding-left: 4px; margin-bottom: 2px; }
.window-b .filter { padding-left: 3px; }
.add { display: flex; align-items: center; justify-content: space-between; width: 83px; height: 24px; padding: 0 5px 0 2px; background: #4ba04e; border: 1px solid #5cb85f; color: #fff; text-shadow: 1px 1px 0 #1d4a1f; }
.search { flex: 1; display: flex; align-items: center; height: 18px; margin: 0 6px 0 2px; background: #cacaca; border-radius: 2px; color: #000; }
.search input { flex: 1; width: 0; padding: 0 5px; border: 0; background: none; }
.search input::placeholder { color: #7a7a7a; opacity: 1; }
.view { display: flex; align-items: center; gap: 3px; width: 38px; color: #fff; }
.eye { width: 18px; height: 12px; }
.group { position: relative; display: flex; align-items: center; height: 24px; margin: 2px 0 0; padding: 0 2px 0 10px; background: #303030; border-radius: 0 3px 3px 0; font-size: 13px; font-weight: 700; text-shadow: 1px 1px 0 #000; }
.window-b .group { padding-left: 9px; }
.filter + .group { margin-top: 0; }
.group small { margin-left: 5px; padding-top: 2px; color: #8a8a8a; font-size: 11px; font-weight: 400; text-shadow: none; }
.group button { display: flex; align-items: center; justify-content: center; width: 20px; height: 18px; margin-left: auto; background: #454545; border-radius: 2px; }
.open::before { content: ""; position: absolute; left: 0; top: 7px; width: 8px; height: 7px; background: #b8b8b8; clip-path: polygon(100% 0, 100% 100%, 0 100%); }
.item { position: relative; display: flex; align-items: center; gap: 3px; height: 20px; padding: 1px 4px 0 10px; font-size: 13px; }
.item.child { padding-left: 21px; gap: 4px; }
.window-b .item { padding-left: 9px; }
.window-b .item.child { padding-left: 20px; }
.item.var { height: 22px; }
.shown { margin-left: auto; }
.graph-icon { width: 16px; height: 14px; }
.pill { width: 14px; height: 7px; margin: 0 1px; border-radius: 4px; background: #f0c; }
.hoop { width: 16px; height: 16px; border: 2px solid #0f97e2; border-radius: 50%; }
.fn { width: 15px; text-align: center; font: italic 700 20px/18px "Liberation Serif", serif; color: #6cb8f0; text-shadow: 1px 1px 0 #000; }
.mint { color: #86d39a; }
.lime { color: #9ae88c; }
.steel { color: #c2d0f4; }

/* Graph surface */
.graph { position: relative; flex: 1; overflow: hidden; border: solid #3e3e3e; border-width: 2px 0 0 2px; background-color: #262626;
  background-image: linear-gradient(90deg, #141414 2px, transparent 2px), linear-gradient(#141414 2px, transparent 2px), linear-gradient(90deg, #343434 2px, transparent 2px), linear-gradient(#343434 2px, transparent 2px);
  background-size: 128px 128px, 128px 128px, 16px 16px, 16px 16px; }
.graph-a { background-position: 91px 92px; }
.graph-b { background-position: 92px 60px; }
.graph::after { content: ""; position: absolute; inset: 0; box-shadow: inset 0 0 26px rgba(0, 0, 0, .55); pointer-events: none; }
.graph-b::before { content: ""; position: absolute; inset: 0; background: linear-gradient(#000, #000) 348px 0 / 2px 100% no-repeat, linear-gradient(#000, #000) 0 188px / 100% 2px no-repeat; }
.crumbs { position: relative; display: flex; align-items: center; height: 42px; padding-left: 7px; background: rgba(0, 0, 0, .6); color: #8c8c8c; font-size: 19px; line-height: 24px; }
.crumbs a, .crumbs span { padding-bottom: 1px; }
.crumbs hr { width: 1px; height: 36px; margin: 0 6px 0 7px; background: #8a8a8a; }
.crumbs .step + hr { margin: 0 11px 0 3px; }
.step { display: flex; justify-content: center; width: 26px; margin-right: 16px; }
.step + .step { margin-right: 8px; }
.arrow { width: 18px; height: 24px; }
.crumb-icon { width: 24px; height: 20px; margin-right: 14px; }
.fn.crumb-icon { font-size: 30px; line-height: 20px; }
.chev { width: 10px; height: 10px; margin: 0 11px 0 7px; border: solid #fff; border-width: 2px 2px 0 0; transform: rotate(45deg); }
.wires { position: absolute; left: 0; top: 0; width: 100%; height: 100%; fill: none; stroke: #fff; stroke-width: 3; }
.wires .pink, .wires .sky, .wires .royal { stroke-width: 2; stroke: currentColor; }
.pink { color: #f0c; }
.sky { color: #00a2f0; }
.royal { color: #0a5cd0; }
.violet { color: #5a10b0; }
.teal { color: #1ecb98; }

/* Nodes */
.node { position: absolute; display: flex; flex-direction: column; color: #f0f0f0; background: linear-gradient(rgba(28, 30, 28, .82), rgba(10, 13, 10, .86) 60px); border: 1px solid #0a0a0a; border-radius: 6px; box-shadow: 0 2px 6px 2px rgba(0, 0, 0, .55); }
.node header { display: flex; align-items: center; gap: 5px; height: 22px; padding: 0 5px 0 8px; border-radius: 5px 5px 0 0; font-size: 13px; box-shadow: inset 0 1px 0 rgba(255, 255, 255, .35); text-shadow: 1px 1px 0 rgba(0, 0, 0, .6); white-space: nowrap; }
.node b { font-weight: 700; }
.blue { background: radial-gradient(ellipse at 45% 60%, rgba(10, 25, 36, .7), transparent 50%), linear-gradient(90deg, #4f7f9f, #3f6a87 50%, #2e3438); }
.red { background: radial-gradient(ellipse at 45% 60%, rgba(50, 5, 5, .5), transparent 50%), linear-gradient(90deg, #981a1a, #84201f 50%, #2f2c2c); }
.purple { background: radial-gradient(ellipse at 45% 60%, rgba(40, 5, 50, .6), transparent 50%), linear-gradient(90deg, #7f1a98, #76208c 50%, #343034); }
.navy { background: radial-gradient(ellipse at 45% 60%, rgba(5, 15, 40, .7), transparent 50%), linear-gradient(90deg, #1b4485, #1d4480 50%, #333538); }
.green { background: radial-gradient(ellipse at 45% 60%, rgba(20, 40, 18, .7), transparent 50%), linear-gradient(90deg, #5f8a58, #557c4f 50%, #333832); }
.node .tall { height: 38px; padding: 2px 5px 0 9px; gap: 4px; }
.tall .fn { align-self: flex-start; }
.tall b, .tall em { display: block; }
.tall em { color: #7f8b70; text-shadow: none; font-size: 12px; line-height: 18px; }
.delegate { width: 11px; height: 11px; margin-left: auto; border: 2px solid #ff3c3c; border-radius: 2px; background: #200; }
.clock { position: absolute; right: -10px; top: -13px; width: 24px; height: 24px; }
.pins { display: flex; justify-content: space-between; padding: 3px 0 2px; white-space: nowrap; }
.in { padding-left: 8px; }
.in .exec { margin-left: 1px; }
.out { padding-right: 9px; }
.x, .d, .n { display: flex; align-items: center; gap: 4px; }
.out > div { justify-content: flex-end; }
.x { height: 28px; }
.d { height: 26px; }
.n { height: 30px; }
.exec { width: 14px; height: 14px; }
.pin { width: 18px; height: 14px; }
.block { display: flex; align-items: center; gap: 4px; height: 44px; padding: 6px 0; }
.block > div { display: flex; flex-direction: column; align-items: flex-start; }
.block label:not(.axis), .block span:not(.select) { line-height: 14px; }
.block.vector { height: 48px; }
.vector .asset { margin: 2px 0 0 7px; }
.asset { display: flex; align-items: center; gap: 4px; margin-left: 7px; color: #454545; }
.field { height: 18px; padding: 0 4px; border: 1px solid #b8b8b8; border-radius: 2px; background: none; }
.url { width: 328px; margin-left: 5px; }
.self { width: 28px; margin-left: 2px; }
.num { width: 18px; margin-left: 2px; }
.axis { display: flex; align-items: center; gap: 8px; width: 49px; height: 19px; padding: 0 5px 0 3px; border: 1px solid #b8b8b8; border-radius: 2px; color: #777; }
.axis input { flex: 1; width: 0; padding: 0; border: 0; background: none; color: #f0f0f0; text-align: right; }
.dark select { width: 100px; height: 18px; padding: 0 2px; border: 0; border-radius: 2px; background: #1f211f; color: #9a9a9a; text-shadow: 1px 1px 0 #000; }
.dark .short { width: 82px; }
.dark::after { top: 7px; right: 3px; width: 8px; background: #aaa; height: 4px; }
.expand { display: flex; justify-content: center; height: 14px; color: #d8d8d8; }
.expand .caret { width: 11px; height: 8px; margin-top: 5px; }

.getter { flex-direction: row; align-items: center; justify-content: flex-end; gap: 4px; height: 32px; padding-right: 12px; border-radius: 15px; }
.setter { height: 68px; border-radius: 14px; }
.setter > b { height: 20px; margin-bottom: -14px; padding-top: 6px; text-align: center; }
.setter .in { padding-left: 10px; }
.setter .out { padding-right: 11px; }
.skyish, .pinkish { background: radial-gradient(ellipse at 45% 0, var(--glow), transparent 60%) 0 0 / 100% 13px no-repeat, radial-gradient(ellipse 60px 40px at 45% 30%, var(--dim), transparent 80%) 0 0 / 100% 26px no-repeat, linear-gradient(rgba(120, 120, 120, .8), rgba(56, 56, 56, .85) 13px, rgba(24, 26, 24, .82) 13px, rgba(14, 16, 14, .86)); box-shadow: inset 0 1px 0 rgba(255, 255, 255, .6), 0 2px 6px 2px rgba(0, 0, 0, .55); }
.skyish { --glow: rgba(60, 170, 220, .85); --dim: rgba(20, 90, 120, .5); }
.pinkish { --glow: rgba(225, 80, 195, .8); --dim: rgba(110, 20, 95, .6); }
.compact { flex-direction: row; align-items: center; justify-content: space-between; padding: 0 10px 0 43px; height: 101px; border-radius: 12px; background: linear-gradient(rgba(90, 90, 90, .8), rgba(36, 36, 36, .8) 13px, rgba(24, 24, 24, .8) 14px); box-shadow: inset 0 1px 0 rgba(255, 255, 255, .5), 0 2px 6px 2px rgba(0, 0, 0, .55); }
.compact b { color: #999; font: 700 26px/32px "Roboto Condensed", "Liberation Sans Narrow", Roboto, sans-serif; }

.n-event { left: 13px; top: 78px; width: 160px; }
.n-download { left: 205px; top: 78px; width: 173px; }
.n-url { left: 44px; top: 158px; width: 132px; }
.n-default { left: 285px; top: 270px; width: 133px; }
.n-set1 { left: 477px; top: 94px; width: 139px; }
.n-set2 { left: 477px; top: 190px; width: 139px; }
.n-mark { left: 765px; top: 126px; width: 225px; }
.n-manager { left: 30px; top: 60px; width: 217px; }
.n-entry { left: 30px; top: 190px; width: 223px; }
.n-schedule { left: 318px; top: 190px; width: 490px; }
.n-slate { left: 862px; top: 254px; width: 258px; height: 149px; }
.n-return1 { left: 1150px; top: 190px; width: 135px; }
.n-return2 { left: 1150px; top: 430px; width: 135px; }
.n-brush { left: 830px; top: 494px; width: 296px; }
```
